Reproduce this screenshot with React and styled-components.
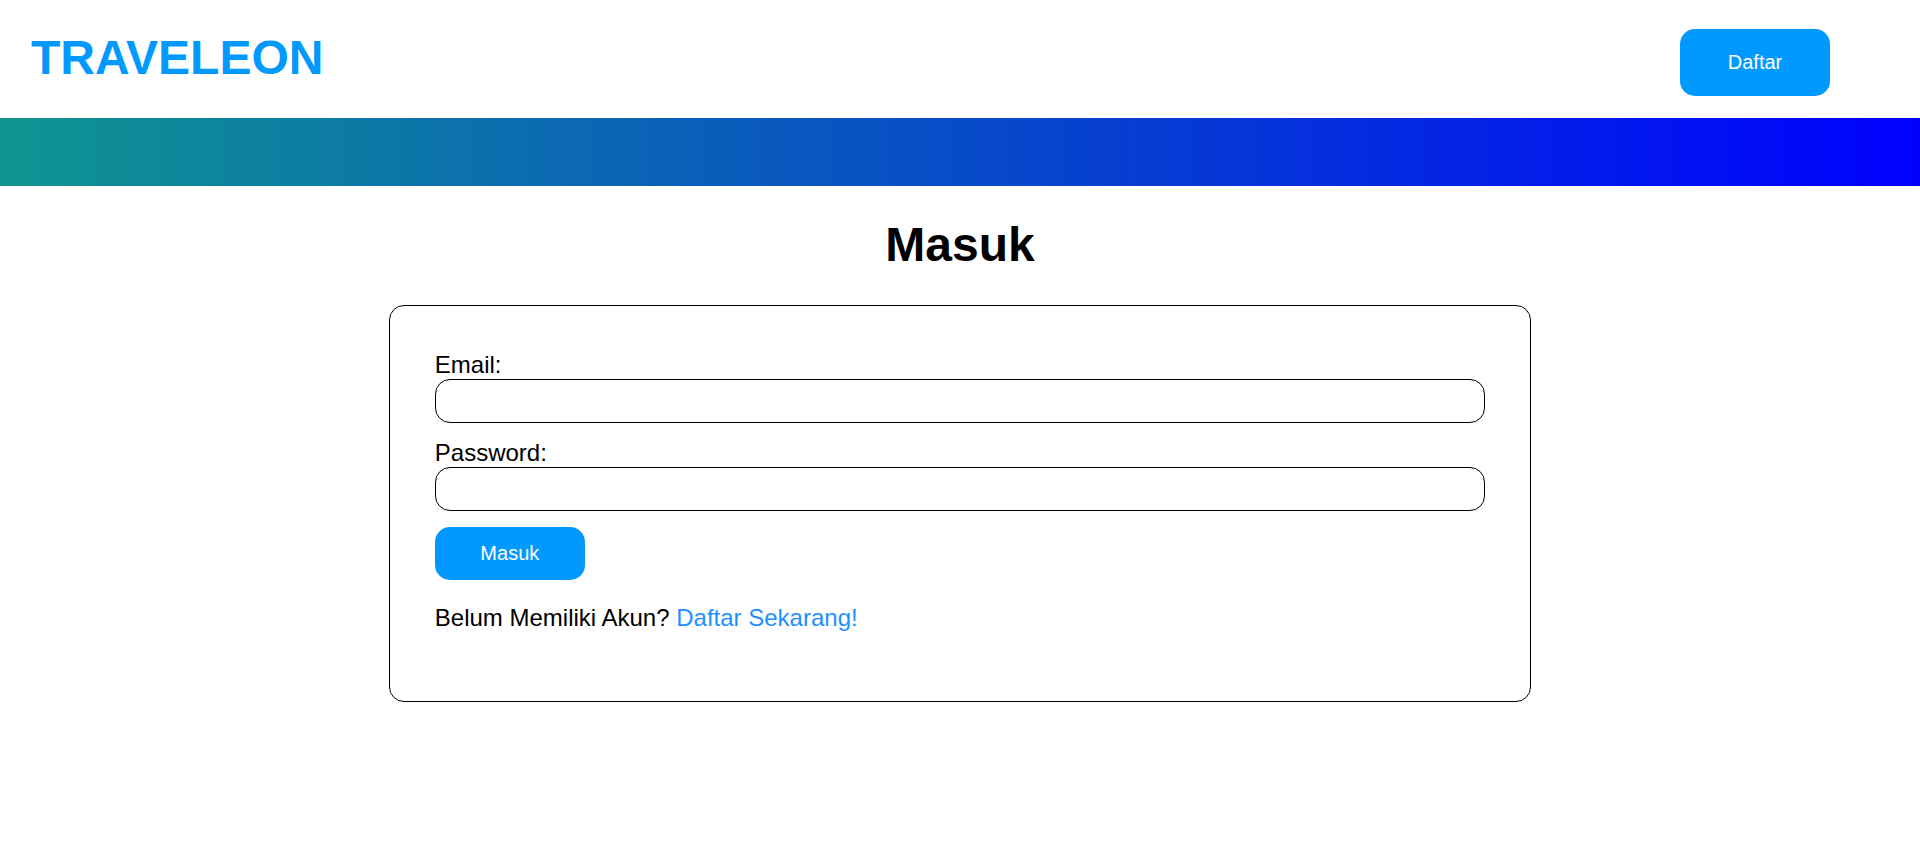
import React from 'react'
import styled, { createGlobalStyle } from 'styled-components'

const GlobalStyle = createGlobalStyle`
    * {
        box-sizing: border-box;
    }
    body {
        margin: 0;
        background: #fff;
        font-family: 'Liberation Sans', Arial, sans-serif;
        color: #000;
    }
`

const Header = styled.header`
    height: 118px;
    display: flex;
    justify-content: space-between;
    align-items: flex-start;
    padding: 0 90px 0 31px;

    .logo {
        margin: 30px 0 0;
        font-size: 48px;
        font-weight: bold;
        line-height: 55px;
        color: #0099ff;
    }
`

const Button = styled.button`
    border: none;
    border-radius: 15px;
    background-color: #0099ff;
    color: #fff;
    font-family: 'Liberation Sans', Arial, sans-serif;
    font-size: 20px;
    width: 150px;
    height: ${p => p.tall ? '67px' : '53px'};
    margin-top: ${p => p.tall ? '29px' : '0'};
    cursor: pointer;
`

const Banner = styled.div`
    height: 68px;
    background: linear-gradient(to right, #0f9591, #0000ff);
`

const Main = styled.main`
    padding: 0 8px;
    display: flex;
    flex-direction: column;
    align-items: center;

    h1 {
        margin: 31px 0 33px;
        font-size: 48px;
        line-height: 55px;
        font-weight: bold;
    }
`

const Card = styled.form`
    width: 60%;
    border: 1px solid #000;
    border-radius: 15px;
    padding: 45px;
    display: flex;
    flex-direction: column;
    font-size: 24px;

    p {
        margin: 24px 0;
        line-height: 28px;
    }
    a {
        color: #1e90ff;
        text-decoration: none;
    }
`

const Field = styled.label`
    display: flex;
    flex-direction: column;
    margin-bottom: 16px;
    line-height: 28px;

    input {
        height: 44px;
        border: 1px solid #000;
        border-radius: 15px;
        padding: 0 15px;
        font-size: 20px;
        font-family: inherit;
        outline: none;
    }
`

const Login = () => {
    return (
        <>
            <GlobalStyle />
            <Header>
                <h1 className="logo">TRAVELEON</h1>
                <Button tall type="button">Daftar</Button>
            </Header>
            <Banner />
            <Main>
                <h1>Masuk</h1>
                <Card onSubmit={e => e.preventDefault()}>
                    <Field>
                        Email:
                        <input type="email" />
                    </Field>
                    <Field>
                        Password:
                        <input type="password" />
                    </Field>
                    <Button type="submit">Masuk</Button>
                    <p>
                        Belum Memiliki Akun? <a href="#">Daftar Sekarang!</a>
                    </p>
                </Card>
            </Main>
        </>
    )
}

export default Login
